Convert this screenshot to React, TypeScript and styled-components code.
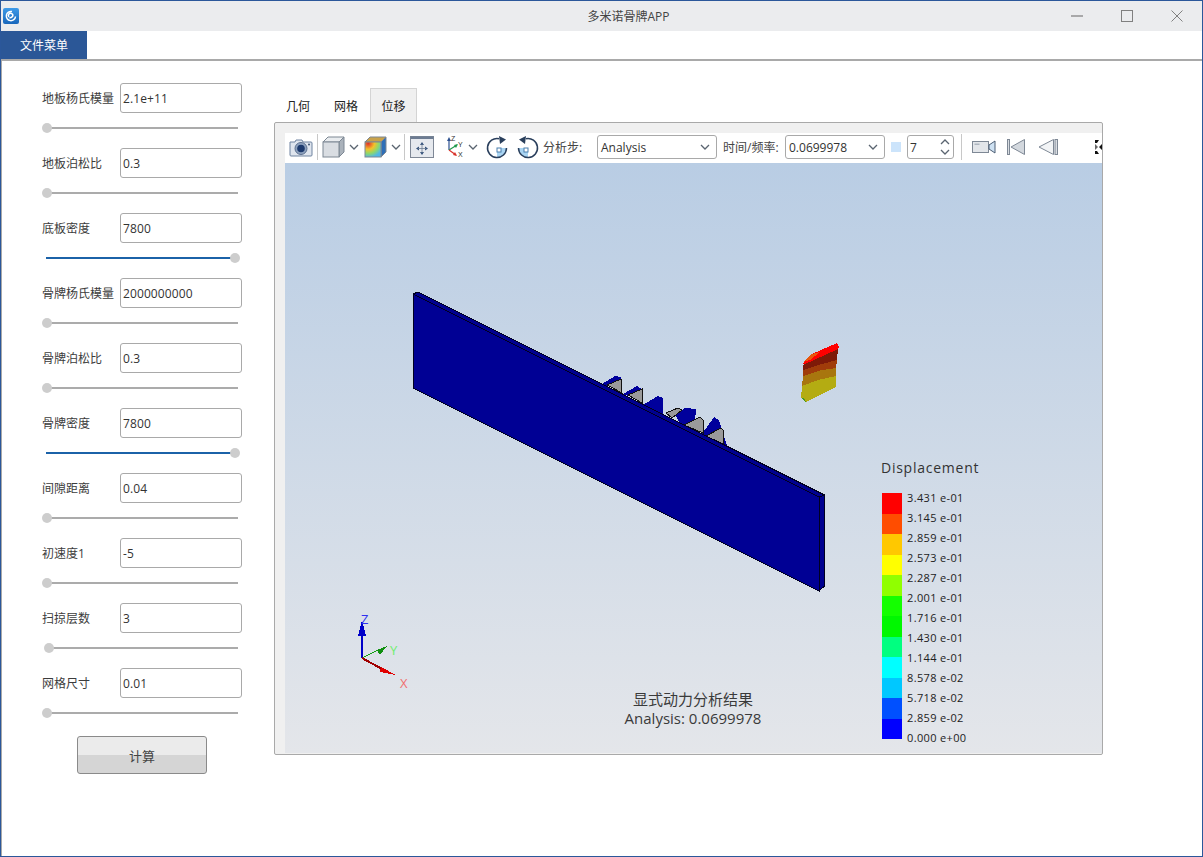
import React from 'react';
import styled, { createGlobalStyle } from 'styled-components';

const uiFont = '"Open Sans", "Noto Sans CJK SC", sans-serif';

const GlobalStyle = createGlobalStyle`
  html, body {
    margin: 0;
    padding: 0;
    background: #ffffff;
    overflow: hidden;
  }
  * {
    box-sizing: border-box;
  }
`;

const Window = styled.div`
  width: 1203px;
  height: 857px;
  border: 1px solid #2b579a;
  display: flex;
  flex-direction: column;
  font-family: ${uiFont};
  font-size: 12px;
  color: #333333;
  background: #ffffff;
`;

const TitleBar = styled.div`
  height: 30px;
  background: #ebecee;
  display: flex;
  align-items: center;
  padding-left: 2px;
`;

const AppTitle = styled.div`
  flex: 1;
  text-align: center;
  padding-left: 186px;
  color: #444444;
`;

const WindowControls = styled.div`
  width: 150px;
  display: flex;
`;

const WindowButton = styled.div`
  width: 50px;
  height: 30px;
  display: flex;
  align-items: center;
  justify-content: center;
`;

const MenuBar = styled.div`
  height: 28px;
  display: flex;
  background: #ffffff;
`;

const MenuButton = styled.div`
  width: 86px;
  background: #2b5797;
  color: #ffffff;
  font-size: 12px;
  display: flex;
  align-items: center;
  justify-content: center;
`;

const Central = styled.div`
  flex: 1;
  display: flex;
  border-top: 2px solid #a9a9a9;
  border-left: 1px solid #a9a9a9;
`;

const ParamPanel = styled.div`
  width: 272px;
  padding: 22px 0 0 40px;
  display: flex;
  flex-direction: column;
`;

const ParamGroup = styled.div`
  height: 65px;
  display: flex;
  flex-direction: column;
`;

const ParamRow = styled.div`
  display: flex;
  align-items: center;
  height: 30px;
`;

const ParamLabel = styled.label`
  width: 78px;
  color: #3c3c3c;
`;

const TextField = styled.div`
  width: 122px;
  height: 30px;
  border: 1px solid #a9a9a9;
  border-radius: 3px;
  padding-left: 2px;
  display: flex;
  align-items: center;
  letter-spacing: 0.1px;
  color: #333333;
  background: #ffffff;
`;

const SliderTrack = styled.div<{ $filled?: boolean }>`
  position: relative;
  width: 192px;
  height: 2px;
  margin: 14px 0 0 4px;
  background: ${(p) => (p.$filled ? '#1b62a8' : '#ababab')};
`;

const SliderHandle = styled.div`
  position: absolute;
  top: -4px;
  width: 10px;
  height: 10px;
  margin-left: -5px;
  border-radius: 50%;
  background: #cdcdcd;
`;

const CalcButton = styled.button`
  width: 130px;
  height: 38px;
  margin: 3px 0 0 35px;
  padding: 0;
  border: 1px solid #8a8a8a;
  border-radius: 3px;
  font-family: inherit;
  font-size: 13px;
  color: #444444;
  background: linear-gradient(#ebebeb 0 50%, #d5d5d5 50% 100%);
`;

const ResultArea = styled.div`
  width: 829px;
  padding-top: 27px;
  display: flex;
  flex-direction: column;
`;

const TabBar = styled.div`
  height: 34px;
  display: flex;
`;

const Tab = styled.div<{ $active?: boolean }>`
  width: ${(p) => (p.$active ? '47px' : '48px')};
  height: 34px;
  display: flex;
  align-items: center;
  justify-content: center;
  color: #222222;
  background: ${(p) => (p.$active ? '#f0f0f0' : 'transparent')};
  border: 1px solid ${(p) => (p.$active ? '#d4d4d4' : 'transparent')};
  border-bottom: none;
`;

const TabPane = styled.div`
  height: 633px;
  border: 1px solid #a9a9a9;
  border-radius: 2px;
  background: #f0f0f0;
  padding: 10px 0 1px 10px;
  display: flex;
  flex-direction: column;
`;

const Toolbar = styled.div`
  height: 30px;
  padding-bottom: 2px;
  background: #ffffff;
  display: flex;
  align-items: center;
  overflow: hidden;
  white-space: nowrap;
`;

const ToolIcon = styled.div<{ $w: number; $ml: number }>`
  flex: none;
  width: ${(p) => p.$w}px;
  margin-left: ${(p) => p.$ml}px;
  display: flex;
  align-items: center;
  justify-content: center;
`;

const ToolSep = styled.div<{ $ml: number }>`
  flex: none;
  width: 1px;
  height: 26px;
  margin-left: ${(p) => p.$ml}px;
  background: #c8c8c8;
`;

const ToolLabel = styled.span<{ $w: number; $ml: number }>`
  flex: none;
  width: ${(p) => p.$w}px;
  margin-left: ${(p) => p.$ml}px;
  color: #444444;
`;

const Combo = styled.div<{ $w: number; $ml: number }>`
  flex: none;
  width: ${(p) => p.$w}px;
  height: 24px;
  margin-left: ${(p) => p.$ml}px;
  border: 1px solid #a9a9a9;
  border-radius: 3px;
  padding: 0 6px 0 3px;
  display: flex;
  align-items: center;
  justify-content: space-between;
  color: #333333;
`;

const ColorSwatch = styled.div`
  flex: none;
  width: 10px;
  height: 10px;
  margin-left: 6px;
  background: #cce4fb;
`;

const SpinBox = styled(Combo)`
  padding: 0 3px 0 2px;
`;

const SpinArrows = styled.div`
  display: flex;
  flex-direction: column;
  gap: 4px;
`;

const Viewport = styled.div`
  position: relative;
  flex: none;
  height: 590px;
  overflow: hidden;
  background: linear-gradient(#b9cde4, #e4e6ea);
`;

const SceneSvg = styled.svg`
  position: absolute;
  inset: 0;
`;

const Legend = styled.div`
  position: absolute;
  left: 596px;
  top: 296px;
  font-family: "Open Sans", sans-serif;
  color: #222222;
`;

const LegendTitle = styled.div`
  font-size: 14px;
  line-height: 18px;
  letter-spacing: 0.75px;
  color: #333333;
`;

const LegendBody = styled.div`
  display: flex;
  margin-top: 16px;
  margin-left: 1px;
`;

const LegendBar = styled.div`
  width: 20px;
  display: flex;
  flex-direction: column;
`;

const LegendBand = styled.div<{ $color: string }>`
  height: 20.5px;
  background: ${(p) => p.$color};
`;

const LegendLabels = styled.div`
  margin: -5px 0 0 5px;
  display: flex;
  flex-direction: column;
`;

const LegendValue = styled.div`
  height: 20px;
  line-height: 20px;
  font-size: 11px;
  letter-spacing: 0.35px;
`;

const ResultCaption = styled.div`
  position: absolute;
  left: 288px;
  width: 240px;
  top: 527px;
  text-align: center;
  font-size: 15px;
  line-height: 19px;
  color: #3a3a3a;
`;

const params: { label: string; value: string; pos: number; filled?: boolean }[] = [
  { label: '地板杨氏模量', value: '2.1e+11', pos: 1 },
  { label: '地板泊松比', value: '0.3', pos: 1 },
  { label: '底板密度', value: '7800', pos: 189, filled: true },
  { label: '骨牌杨氏模量', value: '2000000000', pos: 1 },
  { label: '骨牌泊松比', value: '0.3', pos: 1 },
  { label: '骨牌密度', value: '7800', pos: 189, filled: true },
  { label: '间隙距离', value: '0.04', pos: 1 },
  { label: '初速度1', value: '-5', pos: 1 },
  { label: '扫掠层数', value: '3', pos: 3 },
  { label: '网格尺寸', value: '0.01', pos: 1 },
];

const bands = [
  '#ff0000', '#ff4d00', '#ffc800', '#ffff00', '#90ff00', '#14ff00',
  '#00f800', '#00ff80', '#00ffff', '#00c8ff', '#0050ff', '#0000ff',
];

const legendValues = [
  '3.431 e-01', '3.145 e-01', '2.859 e-01', '2.573 e-01', '2.287 e-01', '2.001 e-01', '1.716 e-01',
  '1.430 e-01', '1.144 e-01', '8.578 e-02', '5.718 e-02', '2.859 e-02', '0.000 e+00',
];

const Chevron = ({ up }: { up?: boolean }) => (
  <svg width="10" height="6" viewBox="0 0 10 6">
    <path d={up ? 'M1 5 L5 1 L9 5' : 'M1 1 L5 5 L9 1'} fill="none" stroke="#5a6470" strokeWidth="1.3" />
  </svg>
);

const AppLogo = () => (
  <svg width="16" height="16" viewBox="0 0 16 16">
    <defs>
      <linearGradient id="logoBg" x1="0" y1="0" x2="0" y2="1">
        <stop offset="0" stopColor="#3f9be8" />
        <stop offset="1" stopColor="#1766bb" />
      </linearGradient>
    </defs>
    <rect width="16" height="16" rx="2" fill="url(#logoBg)" />
    <path d="M12.5 8.5 A4.6 4.6 0 1 1 9 3.6 M6 9 A2.2 2.2 0 1 1 9.6 8.4 Q8 10 6.4 9.8" fill="none" stroke="#ffffff" strokeWidth="1.5" />
  </svg>
);

const CameraIcon = () => (
  <svg width="24" height="20" viewBox="0 0 24 20">
    <path d="M1 5 H6 L7 3 H13 L14 5 H22 Q23 5 23 6 V18 Q23 19 22 19 H2 Q1 19 1 18 Z" fill="#dfe5ee" stroke="#6f83a0" />
    <circle cx="12" cy="11.5" r="6" fill="#8ea2bf" stroke="#5b6f8e" />
    <circle cx="12" cy="11.5" r="3.8" fill="#1d3a6e" />
    <circle cx="20" cy="7.5" r="1" fill="#3a4f70" />
  </svg>
);

const CubeIcon = () => (
  <svg width="23" height="22" viewBox="0 0 23 22">
    <path d="M1 6 L6 1 H22 L17 6 Z" fill="#e9ecef" stroke="#7c8793" />
    <path d="M17 6 L22 1 V16 L17 21 Z" fill="#aab2bb" stroke="#7c8793" />
    <rect x="1" y="6" width="16" height="15" fill="#d9dde2" stroke="#7c8793" />
  </svg>
);

const ColorCubeIcon = () => (
  <svg width="23" height="22" viewBox="0 0 23 22">
    <defs>
      <radialGradient id="cubeFace" cx="0.2" cy="0.1" r="1.1">
        <stop offset="0" stopColor="#e0302a" />
        <stop offset="0.35" stopColor="#f5c22a" />
        <stop offset="0.6" stopColor="#8fd86a" />
        <stop offset="0.85" stopColor="#4fb8e8" />
      </radialGradient>
    </defs>
    <path d="M1 6 L6 1 H22 L17 6 Z" fill="#c9a24a" stroke="#7c8793" />
    <path d="M17 6 L22 1 V16 L17 21 Z" fill="#2e6fb8" stroke="#7c8793" />
    <rect x="1" y="6" width="16" height="15" fill="url(#cubeFace)" stroke="#7c8793" />
  </svg>
);

const FitIcon = () => (
  <svg width="24" height="22" viewBox="0 0 24 22">
    <rect x="0.5" y="0.5" width="23" height="21" fill="#e6e9ee" stroke="#7f8896" />
    <rect x="0.5" y="0.5" width="23" height="2.5" fill="#6d7c92" />
    <path d="M12 6 L10 9 H14 Z M12 19 L10 16 H14 Z M6 12.5 L9 10.5 V14.5 Z M18 12.5 L15 10.5 V14.5 Z" fill="#32507a" />
    <path d="M12 8 V17 M8 12.5 H16" stroke="#6d7c92" strokeWidth="0.8" />
  </svg>
);

const AxesIcon = () => (
  <svg width="20" height="24" viewBox="0 0 20 24">
    <path d="M5 15 V4" stroke="#2b4f8f" strokeWidth="1.2" />
    <path d="M5 15 L13 10" stroke="#1f9a4a" strokeWidth="1.2" />
    <path d="M5 15 L12 20" stroke="#d8322a" strokeWidth="1.2" />
    <path d="M5 2 L3 6 H7 Z" fill="#2b4f8f" />
    <path d="M14 9 L10 10 L12 13 Z" fill="#1f9a4a" />
    <path d="M13 21 L9 20 L11 17 Z" fill="#d8322a" />
    <text x="7" y="6" fontSize="7" fill="#333333" fontFamily="Liberation Sans">Z</text>
    <text x="14" y="12" fontSize="7" fill="#333333" fontFamily="Liberation Sans">Y</text>
    <text x="14" y="22" fontSize="7" fill="#333333" fontFamily="Liberation Sans">X</text>
  </svg>
);

const RotateIcon = ({ flip }: { flip?: boolean }) => (
  <svg width="22" height="23" viewBox="0 0 22 23" style={flip ? { transform: 'scaleX(-1)' } : undefined}>
    <path d="M11 12 H20.5 A9.5 9.5 0 0 1 11 21.5 Z" fill="#a9d4f2" />
    <rect x="11" y="12" width="4" height="4" fill="#ffffff" stroke="#4a7fae" />
    <path d="M20.5 12 A9.5 9.5 0 1 1 13 2.7" fill="none" stroke="#2a3f5c" strokeWidth="1.5" />
    <path d="M13 0 L20 3.5 L14 8 Z" fill="#2a3f5c" />
  </svg>
);

const VideoIcon = () => (
  <svg width="24" height="14" viewBox="0 0 24 14">
    <rect x="0.5" y="1.5" width="16" height="11" fill="#e3e6ea" stroke="#7e8895" />
    <rect x="2.5" y="3.5" width="5" height="1.5" fill="#aeb6c0" />
    <path d="M17 5 L23 1 V13 L17 9 Z" fill="#cfe2f3" stroke="#4d5e74" />
  </svg>
);

const FirstFrameIcon = () => (
  <svg width="18" height="16" viewBox="0 0 18 16">
    <rect x="0.5" y="0.5" width="2" height="15" fill="#d9dde2" stroke="#7e8895" />
    <path d="M17.5 0.5 V15.5 L4 8 Z" fill="#d3d8de" stroke="#7e8895" />
  </svg>
);

const PrevFrameIcon = () => (
  <svg width="20" height="16" viewBox="0 0 20 16">
    <path d="M15.5 0.5 V15.5 L1 8 Z" fill="#f2f4f6" stroke="#7e8895" />
    <rect x="17" y="0.5" width="2.5" height="15" fill="#d9dde2" stroke="#7e8895" />
  </svg>
);

const ClippedFrameIcon = () => (
  <svg width="9" height="16" viewBox="0 0 9 16">
    <path d="M1 1 H5 L3 4 H1 Z M1 15 H5 L3 12 H1 Z M9 4 L5 8 L9 12 Z" fill="#111111" />
    <path d="M1 5 V11 L4 8 Z" fill="#666666" />
  </svg>
);

const Scene = () => (
  <SceneSvg width="818" height="590" viewBox="285 163 818 590">
    <g shapeRendering="crispEdges">
      {/* falling dominoes behind the plate */}
      <g fill="#00009c">
        <polygon points="602,384 615,376 621,377 622,382 607,386" />
        <polygon points="623,394 637,386 642,389 642,392 628,396" />
        <polygon points="643,405 658,396 663,398 663,414" />
        <polygon points="675,415 685,408 696,409 695,422 682,426" />
        <polygon points="702,434 714,417 719,420 723,433 728,449" />
      </g>
      <g fill="#9a9a9a" stroke="#111111">
        <polygon points="607,385 621,379 622,393" />
        <polygon points="628,395 642,389 642,403" />
        <polygon points="666,413 678,408 682,410 672,418" />
        <polygon points="684,425 700,417 703,420 703,433" />
        <polygon points="706,436 721,428 723,430 723,445" />
      </g>
      {/* plate */}
      <polygon points="413,294 418,292 824.5,495 819,497" fill="#000090" stroke="#000020" />
      <polygon points="819,497 824.5,495 824.5,586 819,591" fill="#000090" stroke="#000020" />
      <polygon points="413,294 819,497 819,591 413,388" fill="#000094" stroke="#000020" />
      {/* displaced domino */}
      <polygon points="803,363 812,354 837,343 839,347 837,352 805,366" fill="#ff0000" />
      <polygon points="803,362 812,354 820,352 810,360" fill="#e8560c" />
      <polygon points="803,365 838,349 837,360 815,366 803,370" fill="#7d1a08" />
      <polygon points="803,370 815,366 837,360 836,368 822,370 803,376" fill="#a03c0a" />
      <polygon points="803,376 822,370 836,368 836,376 818,380 802,386" fill="#a8760e" />
      <polygon points="802,386 818,380 836,376 836,387 806,402 801,398" fill="#b4ac12" />
      <polygon points="801,398 804,398 806,402" fill="#4a9a20" />
      {/* triad */}
      <line x1="362" y1="658" x2="362" y2="630" stroke="#0000c8" strokeWidth="2" />
      <polygon points="362,620 358,636 366,636" fill="#0000c8" />
      <line x1="362" y1="658" x2="378" y2="650" stroke="#10a010" />
      <polygon points="387,646 377,650 380,655" fill="#109010" />
      <line x1="362" y1="658" x2="382" y2="669" stroke="#a00000" strokeWidth="2" />
      <polygon points="396,675 381,667 380,672" fill="#e00000" />
    </g>
    <g fontFamily="Open Sans" fontSize="13">
      <text x="361" y="624" fill="#3030f0">Z</text>
      <text x="390" y="655" fill="#70ee70">Y</text>
      <text x="400" y="688" fill="#f07070">X</text>
    </g>
  </SceneSvg>
);

export default function App() {
  return (
    <Window>
      <GlobalStyle />
      <TitleBar>
        <AppLogo />
        <AppTitle>多米诺骨牌APP</AppTitle>
        <WindowControls>
          <WindowButton>
            <svg width="12" height="12" viewBox="0 0 12 12"><path d="M0 6 H12" stroke="#8c8c8c" strokeWidth="1.4" /></svg>
          </WindowButton>
          <WindowButton>
            <svg width="12" height="12" viewBox="0 0 12 12"><rect x="0.5" y="0.5" width="11" height="11" fill="none" stroke="#808080" /></svg>
          </WindowButton>
          <WindowButton>
            <svg width="12" height="12" viewBox="0 0 12 12"><path d="M0.5 0.5 L11.5 11.5 M11.5 0.5 L0.5 11.5" stroke="#808080" /></svg>
          </WindowButton>
        </WindowControls>
      </TitleBar>
      <MenuBar>
        <MenuButton>文件菜单</MenuButton>
      </MenuBar>
      <Central>
        <ParamPanel>
          {params.map((p) => (
            <ParamGroup key={p.label}>
              <ParamRow>
                <ParamLabel>{p.label}</ParamLabel>
                <TextField>{p.value}</TextField>
              </ParamRow>
              <SliderTrack $filled={p.filled}>
                <SliderHandle style={{ left: p.pos }} />
              </SliderTrack>
            </ParamGroup>
          ))}
          <CalcButton>计算</CalcButton>
        </ParamPanel>
        <ResultArea>
          <TabBar>
            <Tab>几何</Tab>
            <Tab>网格</Tab>
            <Tab $active>位移</Tab>
          </TabBar>
          <TabPane>
            <Toolbar>
              <ToolIcon $w={24} $ml={4}><CameraIcon /></ToolIcon>
              <ToolSep $ml={4} />
              <ToolIcon $w={23} $ml={4}><CubeIcon /></ToolIcon>
              <ToolIcon $w={10} $ml={4}><Chevron /></ToolIcon>
              <ToolIcon $w={23} $ml={5}><ColorCubeIcon /></ToolIcon>
              <ToolIcon $w={10} $ml={4}><Chevron /></ToolIcon>
              <ToolSep $ml={3} />
              <ToolIcon $w={24} $ml={5}><FitIcon /></ToolIcon>
              <ToolIcon $w={20} $ml={10}><AxesIcon /></ToolIcon>
              <ToolIcon $w={10} $ml={4}><Chevron /></ToolIcon>
              <ToolIcon $w={22} $ml={8}><RotateIcon /></ToolIcon>
              <ToolIcon $w={22} $ml={9}><RotateIcon flip /></ToolIcon>
              <ToolLabel $w={50} $ml={4}>分析步:</ToolLabel>
              <Combo $w={120} $ml={4}>Analysis<Chevron /></Combo>
              <ToolLabel $w={58} $ml={6}>时间/频率:</ToolLabel>
              <Combo $w={100} $ml={4}>0.0699978<Chevron /></Combo>
              <ColorSwatch />
              <SpinBox $w={47} $ml={6}>
                7
                <SpinArrows><Chevron up /><Chevron /></SpinArrows>
              </SpinBox>
              <ToolSep $ml={7} />
              <ToolIcon $w={24} $ml={10}><VideoIcon /></ToolIcon>
              <ToolIcon $w={18} $ml={11}><FirstFrameIcon /></ToolIcon>
              <ToolIcon $w={20} $ml={13}><PrevFrameIcon /></ToolIcon>
              <ToolIcon $w={9} $ml={36}><ClippedFrameIcon /></ToolIcon>
            </Toolbar>
            <Viewport>
              <Scene />
              <Legend>
                <LegendTitle>Displacement</LegendTitle>
                <LegendBody>
                  <LegendBar>
                    {bands.map((c, i) => <LegendBand key={i} $color={c} />)}
                  </LegendBar>
                  <LegendLabels>
                    {legendValues.map((v) => <LegendValue key={v}>{v}</LegendValue>)}
                  </LegendLabels>
                </LegendBody>
              </Legend>
              <ResultCaption>
                显式动力分析结果
                <br />
                Analysis: 0.0699978
              </ResultCaption>
            </Viewport>
          </TabPane>
        </ResultArea>
      </Central>
    </Window>
  );
}
